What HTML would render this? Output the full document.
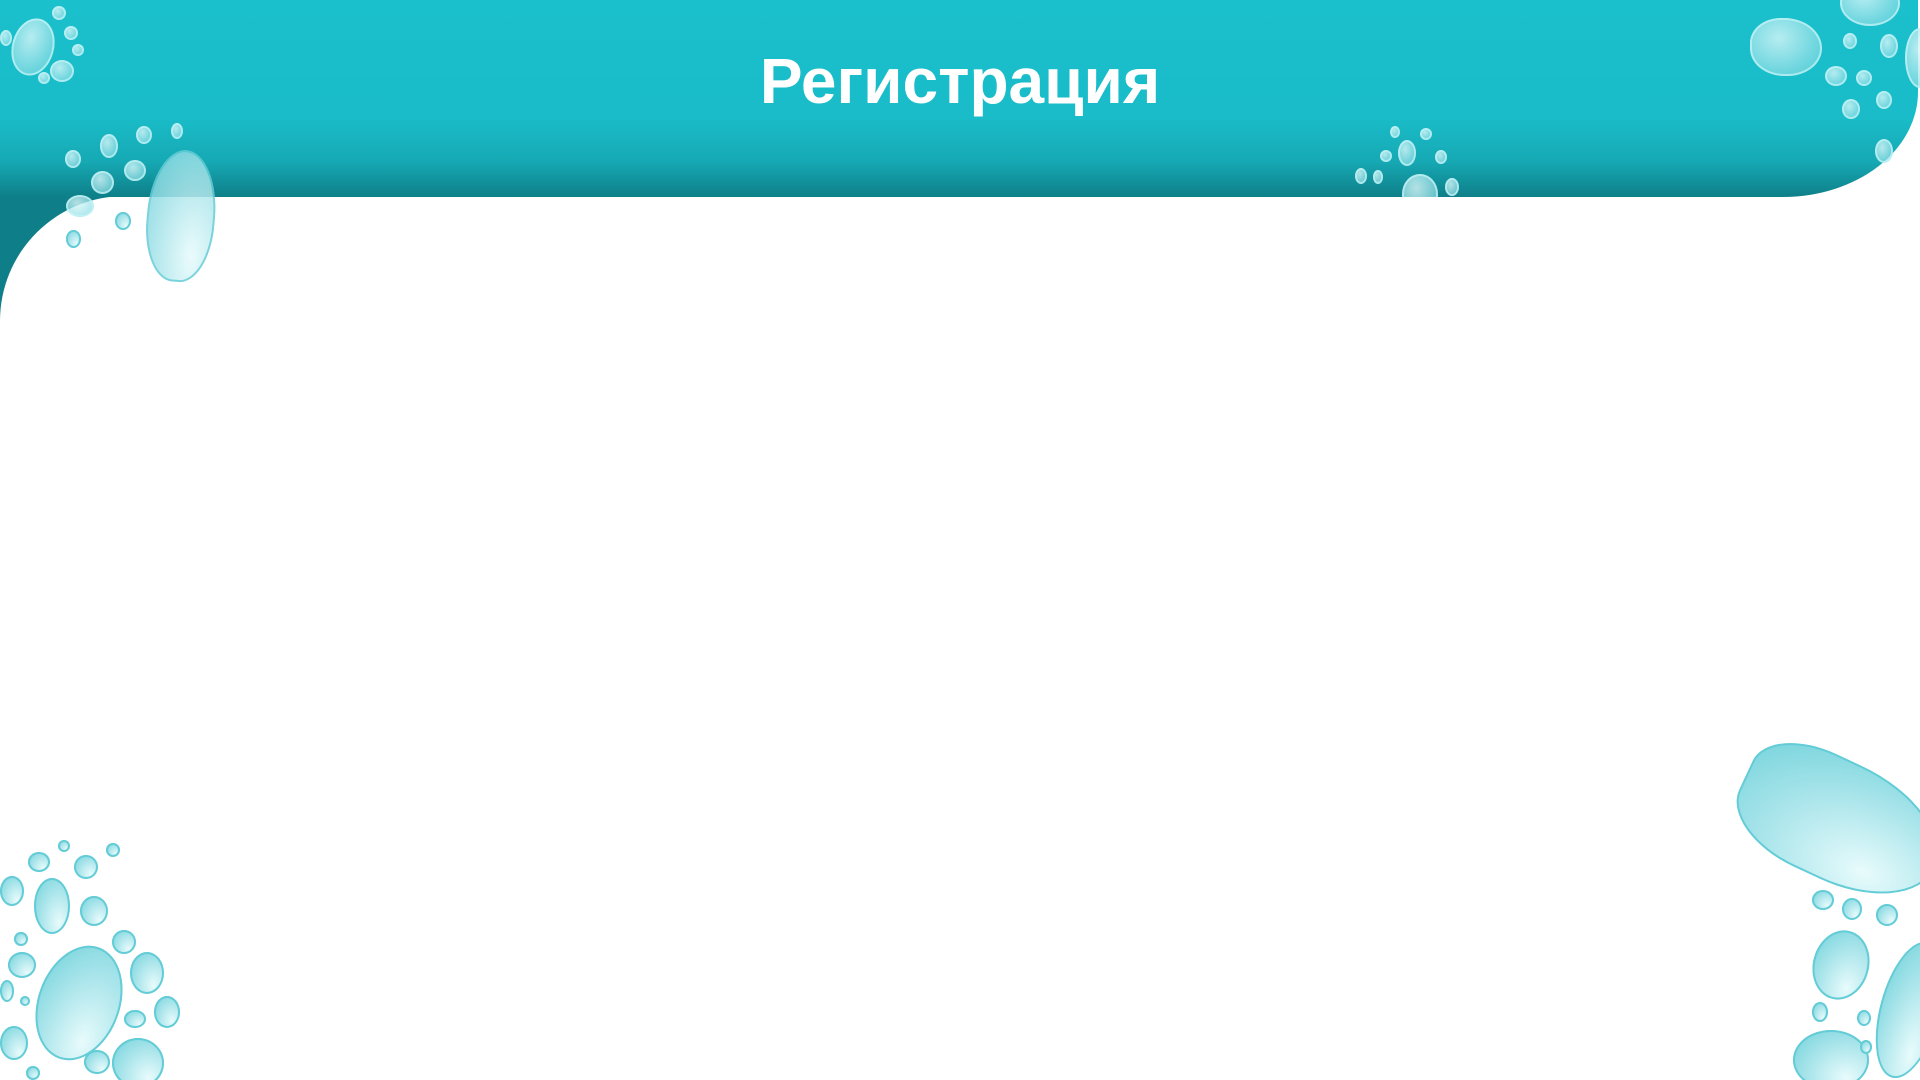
<!DOCTYPE html>
<html><head><meta charset="utf-8"><style>
html,body{margin:0;width:1920px;height:1080px;overflow:hidden;background:#fff;position:relative;font-family:"Liberation Sans",sans-serif}
.tealL{position:absolute;left:0;top:190px;width:260px;height:160px;background:#0e7f88}
.main{position:absolute;left:0;top:196px;width:1920px;height:884px;background:#fff;border-top-left-radius:125px 125px}
.head{position:absolute;left:0;top:0;width:1918px;height:197px;background:linear-gradient(180deg,#1ac0cc 0%,#19bcc8 60%,#16a9b4 82%,#0e7f88 100%);border-bottom-right-radius:135px 105px;overflow:hidden}
h1{position:absolute;left:0;width:1920px;top:44px;margin:0;text-align:center;color:#fff;font-size:64px;font-weight:bold;letter-spacing:0px;font-family:"Comic Sans MS","Liberation Sans",sans-serif}
.d{position:absolute;border-radius:50%;background:radial-gradient(ellipse at 40% 35%,rgba(220,248,250,.8),rgba(150,225,232,.7) 60%,rgba(90,205,215,.8));box-shadow:inset 0 0 0 2px rgba(200,245,248,.7)}
.w{background:radial-gradient(ellipse at 70% 80%,#e8fbfc,#a4e3e9 55%,#6fd1da);box-shadow:inset 0 0 0 2px #63ccd6}
</style></head><body>
<div class="tealL"></div>
<div class="main"></div>
<div class="head">
<div class="d" style="left:1398px;top:140px;width:18px;height:26px"></div>
<div class="d" style="left:1380px;top:150px;width:12px;height:12px"></div>
<div class="d" style="left:1420px;top:128px;width:12px;height:12px"></div>
<div class="d" style="left:1390px;top:126px;width:10px;height:12px"></div>
<div class="d" style="left:1373px;top:170px;width:10px;height:14px"></div>
<div class="d" style="left:1355px;top:168px;width:12px;height:16px"></div>
<div class="d" style="left:1435px;top:150px;width:12px;height:14px"></div>
<div class="d" style="left:1445px;top:178px;width:14px;height:18px"></div>
<div class="d" style="left:1402px;top:174px;width:36px;height:40px"></div>
</div>
<h1>Регистрация</h1>
<!-- top left -->
<div class="d" style="left:12px;top:18px;width:42px;height:58px;transform:rotate(15deg)"></div>
<div class="d" style="left:50px;top:60px;width:24px;height:22px"></div>
<div class="d" style="left:52px;top:6px;width:14px;height:14px"></div>
<div class="d" style="left:64px;top:26px;width:14px;height:14px"></div>
<div class="d" style="left:72px;top:44px;width:12px;height:12px"></div>
<div class="d" style="left:0px;top:30px;width:12px;height:16px"></div>
<div class="d" style="left:38px;top:72px;width:12px;height:12px"></div>
<div class="d" style="left:65px;top:150px;width:16px;height:18px"></div>
<div class="d" style="left:100px;top:134px;width:18px;height:24px"></div>
<div class="d" style="left:136px;top:126px;width:16px;height:18px"></div>
<div class="d" style="left:171px;top:123px;width:12px;height:16px"></div>
<div class="d" style="left:91px;top:171px;width:23px;height:23px"></div>
<div class="d" style="left:124px;top:160px;width:22px;height:21px"></div>
<div class="d" style="left:66px;top:195px;width:28px;height:22px"></div>
<div class="d w" style="left:115px;top:212px;width:16px;height:18px"></div>
<div class="d w" style="left:66px;top:230px;width:15px;height:18px"></div>
<div class="d w" style="left:147px;top:150px;width:68px;height:132px;border-radius:50% 50% 45% 45%;transform:rotate(5deg);opacity:.85"></div>
<!-- top right -->
<div class="d" style="left:1750px;top:18px;width:72px;height:58px;border-radius:45% 55% 50% 50%"></div>
<div class="d" style="left:1840px;top:-20px;width:60px;height:46px"></div>
<div class="d" style="left:1905px;top:28px;width:30px;height:60px"></div>
<div class="d" style="left:1843px;top:33px;width:14px;height:16px"></div>
<div class="d" style="left:1880px;top:34px;width:18px;height:24px"></div>
<div class="d" style="left:1825px;top:66px;width:22px;height:20px"></div>
<div class="d" style="left:1856px;top:70px;width:16px;height:16px"></div>
<div class="d" style="left:1876px;top:91px;width:16px;height:18px"></div>
<div class="d" style="left:1842px;top:99px;width:18px;height:20px"></div>
<div class="d" style="left:1875px;top:139px;width:18px;height:24px"></div>
<!-- bottom left -->
<div class="d w" style="left:38px;top:944px;width:82px;height:118px;transform:rotate(20deg)"></div>
<div class="d w" style="left:34px;top:878px;width:36px;height:56px"></div>
<div class="d w" style="left:0px;top:876px;width:24px;height:30px"></div>
<div class="d w" style="left:28px;top:852px;width:22px;height:20px"></div>
<div class="d w" style="left:74px;top:855px;width:24px;height:24px"></div>
<div class="d w" style="left:58px;top:840px;width:12px;height:12px"></div>
<div class="d w" style="left:106px;top:843px;width:14px;height:14px"></div>
<div class="d w" style="left:80px;top:896px;width:28px;height:30px"></div>
<div class="d w" style="left:112px;top:930px;width:24px;height:24px"></div>
<div class="d w" style="left:130px;top:952px;width:34px;height:42px"></div>
<div class="d w" style="left:8px;top:952px;width:28px;height:26px"></div>
<div class="d w" style="left:14px;top:932px;width:14px;height:14px"></div>
<div class="d w" style="left:0px;top:980px;width:14px;height:22px"></div>
<div class="d w" style="left:20px;top:996px;width:10px;height:10px"></div>
<div class="d w" style="left:124px;top:1010px;width:22px;height:18px"></div>
<div class="d w" style="left:154px;top:996px;width:26px;height:32px"></div>
<div class="d w" style="left:112px;top:1038px;width:52px;height:50px"></div>
<div class="d w" style="left:84px;top:1050px;width:26px;height:24px"></div>
<div class="d w" style="left:0px;top:1026px;width:28px;height:34px"></div>
<div class="d w" style="left:26px;top:1066px;width:14px;height:14px"></div>
<!-- bottom right -->
<div class="d w" style="left:1735px;top:762px;width:210px;height:120px;border-radius:40% 60% 55% 45%;transform:rotate(25deg)"></div>
<div class="d w" style="left:1813px;top:930px;width:56px;height:70px;transform:rotate(15deg)"></div>
<div class="d w" style="left:1793px;top:1030px;width:76px;height:60px"></div>
<div class="d w" style="left:1880px;top:940px;width:60px;height:140px;transform:rotate(15deg)"></div>
<div class="d w" style="left:1812px;top:890px;width:22px;height:20px"></div>
<div class="d w" style="left:1842px;top:898px;width:20px;height:22px"></div>
<div class="d w" style="left:1876px;top:904px;width:22px;height:22px"></div>
<div class="d w" style="left:1812px;top:1002px;width:16px;height:20px"></div>
<div class="d w" style="left:1857px;top:1010px;width:14px;height:16px"></div>
<div class="d w" style="left:1860px;top:1040px;width:12px;height:14px"></div>
</body></html>
